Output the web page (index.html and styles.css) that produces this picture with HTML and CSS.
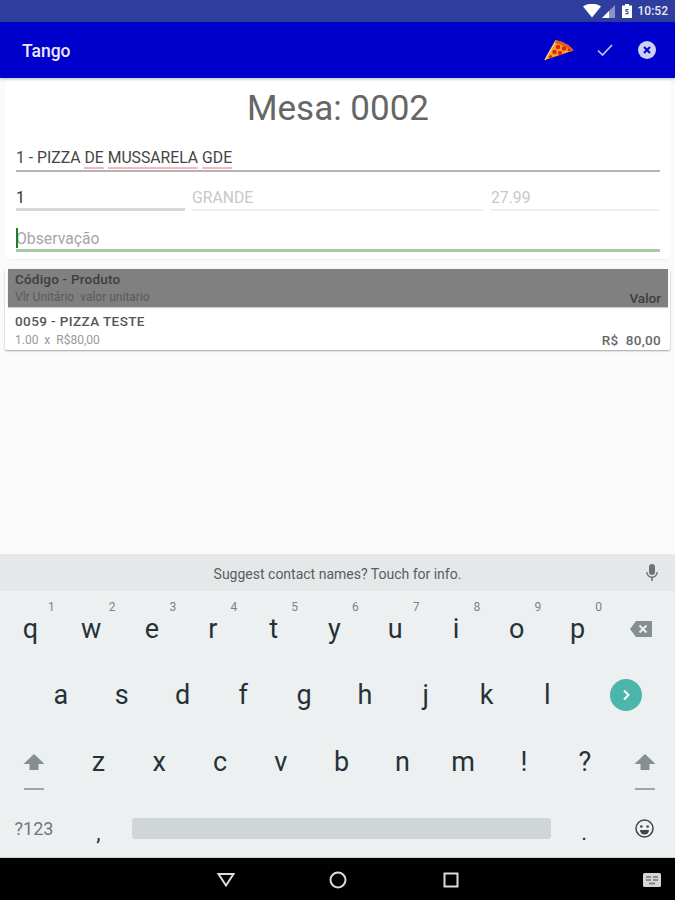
FILE: index.html
```html
<!DOCTYPE html>
<html lang="pt">
<head>
<meta charset="utf-8">
<title>Tango</title>
<link rel="stylesheet" href="styles.css">
</head>
<body>
<div class="screen">
  <div class="statusbar">
    <svg class="st-wifi" width="18" height="14" viewBox="0 0 18 14"><path d="M0 2.500C5-1 13-1 18 2.500L9 13.500z" fill="#fff"/></svg>
    <svg class="st-signal" width="13" height="13" viewBox="0 0 13 13"><path d="M0 13L13 0v13z" fill="#8d94c4"/><path d="M0 13l7-7v7z" fill="#fff"/></svg>
    <svg class="st-batt" width="10" height="14" viewBox="0 0 10 14"><path d="M3 0h4v1.500h3V14H0V1.500h3z" fill="#fff"/><path d="M3.500 5h3v1.300h-2v1h2v3h-3V9h2V8h-2z" fill="#3a469c"/></svg>
    <span class="st-time">10:52</span>
  </div>
  <header class="appbar">
    <span class="app-title">Tango</span>
    <div class="app-actions">
      <svg class="ic-pizza" width="30" height="22" viewBox="0 0 30 22">
        <path d="M1 21L12 1.500C18 2 26 6 29.500 11.500z" fill="#f9a21b"/>
        <path d="M1 21L12 1.500" stroke="#f9d080" stroke-width="1.500"/>
        <path d="M12 1.500C18 2 26 6 29.500 11.500l-2.500 1C23 8 17 5 11 4z" fill="#e8561b"/>
        <circle cx="14" cy="8" r="2.300" fill="#d8261c"/><circle cx="20" cy="9.500" r="2.300" fill="#d8261c"/>
        <circle cx="10.500" cy="13" r="2.300" fill="#d8261c"/><circle cx="16" cy="14" r="2.200" fill="#d8261c"/>
        <circle cx="25" cy="11" r="1.300" fill="#d8261c"/><circle cx="6.500" cy="17.500" r="1.600" fill="#d8261c"/>
      </svg>
      <svg class="ic-check" width="16" height="12" viewBox="0 0 16 12"><path d="M1 6.500l4.500 4.500L15 1" fill="none" stroke="#c9cbf3" stroke-width="1.600"/></svg>
      <svg class="ic-close" width="18" height="18" viewBox="0 0 18 18"><circle cx="9" cy="9" r="9" fill="#cdcff6"/><path d="M6 6l6 6M12 6l-6 6" stroke="#0000cd" stroke-width="2"/></svg>
    </div>
  </header>
  <main class="content">
    <section class="form-card">
      <h1 class="mesa">Mesa: 0002</h1>
      <div class="field field-main">1 - PIZZA <span class="spell">DE</span> <span class="spell">MUSSARELA</span> <span class="spell">GDE</span></div>
      <div class="field-row">
        <div class="field field-qty">1</div>
        <div class="field field-off field-size">GRANDE</div>
        <div class="field field-off field-price">27.99</div>
      </div>
      <div class="field field-obs"><span class="cursor"></span>Observação</div>
    </section>
    <section class="list-card">
      <div class="list-head">
        <div class="cell-left">
          <div class="title-line">Código - Produto</div>
          <div class="sub-line">Vlr Unitário&nbsp; valor unitario</div>
        </div>
        <div class="cell-value">Valor</div>
      </div>
      <div class="list-row">
        <div class="cell-left">
          <div class="title-line">0059 - PIZZA TESTE</div>
          <div class="sub-line">1.00&nbsp; x&nbsp; R$80,00</div>
        </div>
        <div class="cell-value">R$&nbsp; 80,00</div>
      </div>
    </section>
  </main>
  <div class="keyboard">
    <div class="suggest">
      <span class="suggest-text">Suggest contact names? Touch for info.</span>
      <svg class="ic-mic" width="12" height="18" viewBox="0 0 12 18"><rect x="3" y="0" width="6" height="11" rx="3" fill="#6b7478"/><path d="M.8 8a5.200 5.200 0 0 0 10.400 0" fill="none" stroke="#6b7478" stroke-width="1.400"/><path d="M6 13v4" stroke="#6b7478" stroke-width="1.600"/></svg>
    </div>
    <div class="kb-row row-first">
      <div class="key"><sup>1</sup>q</div><div class="key"><sup>2</sup>w</div><div class="key"><sup>3</sup>e</div><div class="key"><sup>4</sup>r</div><div class="key"><sup>5</sup>t</div><div class="key"><sup>6</sup>y</div><div class="key"><sup>7</sup>u</div><div class="key"><sup>8</sup>i</div><div class="key"><sup>9</sup>o</div><div class="key"><sup>0</sup>p</div>
      <div class="key key-grow">
        <svg width="22" height="16" viewBox="0 0 22 16"><path d="M6 0h16v16H6L0 8z" fill="#858e92"/><path d="M9.500 4.500l7 7M16.500 4.500l-7 7" stroke="#eceff1" stroke-width="2"/></svg>
      </div>
    </div>
    <div class="kb-row row-indent">
      <div class="key">a</div><div class="key">s</div><div class="key">d</div><div class="key">f</div><div class="key">g</div><div class="key">h</div><div class="key">j</div><div class="key">k</div><div class="key">l</div>
      <div class="key key-grow">
        <svg width="32" height="32" viewBox="0 0 32 32"><circle cx="16" cy="16" r="16" fill="#4db6ac"/><path d="M14 11.500l4.500 4.500-4.500 4.500" fill="none" stroke="#fff" stroke-width="2"/></svg>
      </div>
    </div>
    <div class="kb-row row-third">
      <div class="key key-side key-shift">
        <svg width="22" height="36" viewBox="0 0 22 36"><path d="M11 0L21.500 10H15.500V16H6.500V10H.5z" fill="#858e92"/><path d="M1 35h20" stroke="#858e92" stroke-width="1.500"/></svg>
      </div>
      <div class="key">z</div><div class="key">x</div><div class="key">c</div><div class="key">v</div><div class="key">b</div><div class="key">n</div><div class="key">m</div><div class="key">!</div><div class="key">?</div>
      <div class="key key-grow key-shift">
        <svg width="22" height="36" viewBox="0 0 22 36"><path d="M11 0L21.500 10H15.500V16H6.500V10H.5z" fill="#858e92"/><path d="M1 35h20" stroke="#858e92" stroke-width="1.500"/></svg>
      </div>
    </div>
    <div class="kb-row row-last">
      <div class="key key-side key-sym">?123</div>
      <div class="key key-punct">,</div>
      <div class="key key-space"><span class="spacebar"></span></div>
      <div class="key key-punct">.</div>
      <div class="key key-grow">
        <svg width="19" height="19" viewBox="0 0 19 19"><circle cx="9.500" cy="9.500" r="8.500" fill="none" stroke="#3c4548" stroke-width="1.500"/><circle cx="6.300" cy="7.500" r="1.300" fill="#3c4548"/><circle cx="12.700" cy="7.500" r="1.300" fill="#3c4548"/><path d="M5 11h9a4.500 4.500 0 0 1-9 0z" fill="#3c4548"/></svg>
      </div>
    </div>
  </div>
  <nav class="navbar">
    <svg class="nav-back" width="18" height="14" viewBox="0 0 18 14"><path d="M1.500 1h15L9 12.500z" fill="none" stroke="#dcdcdc" stroke-width="2"/></svg>
    <svg class="nav-home" width="18" height="18" viewBox="0 0 18 18"><circle cx="9" cy="9" r="7.500" fill="none" stroke="#dcdcdc" stroke-width="2"/></svg>
    <svg class="nav-recent" width="16" height="16" viewBox="0 0 16 16"><rect x="1.500" y="1.500" width="13" height="13" fill="none" stroke="#dcdcdc" stroke-width="2"/></svg>
    <svg class="nav-kbd" width="18" height="14" viewBox="0 0 18 14"><rect width="18" height="14" rx="1.500" fill="#d6d6d6"/><path d="M3 4h5M10 4h5M3 7h5M10 7h5M6 10.500h6" stroke="#777" stroke-width="1.300"/></svg>
  </nav>
</div>
</body>
</html>
```
FILE: styles.css
```css
* { box-sizing: border-box; }
html, body { margin: 0; padding: 0; }
body { width: 675px; height: 900px; overflow: hidden; font-family: Roboto, "Noto Sans", sans-serif; }
.screen { width: 675px; height: 900px; display: flex; flex-direction: column; background: #fafafa; }

.statusbar { height: 22px; flex: none; background: #2f3d9d; display: flex; align-items: center; justify-content: flex-end; padding-right: 7px; color: #fff; }
.st-wifi { margin-right: 1px; }
.st-signal { margin-right: 7px; }
.st-batt { margin-right: 6px; }
.st-time { font-size: 12px; font-weight: 500; color: #e8eaf6; }

.appbar { height: 56px; flex: none; background: #0000cd; display: flex; align-items: center; justify-content: space-between; padding: 0 19px 0 22px; box-shadow: 0 1px 3px rgba(0,0,0,.25); position: relative; }
.app-title { color: #e9e9fb; font-size: 17.500px; font-weight: 500; padding-top: 1px; }
.app-actions { display: flex; align-items: center; }
.ic-pizza { margin-right: 23px; }
.ic-check { margin-right: 25px; }

.content { flex: 1; min-height: 0; padding: 2px 5px 0; }
.form-card { background: #fff; border-radius: 4px; height: 179px; padding: 10px 10px 0 11px; box-shadow: 0 1px 1px rgba(0,0,0,.04); }
.mesa { margin: 0; height: 38px; line-height: 38px; font-size: 35px; font-weight: 400; text-align: center; color: #666; }
.field { font-size: 15.750px; height: 24px; line-height: 21px; color: #333; border-bottom: 2px solid #b5b5b5; }
.field-main { margin-top: 19px; height: 25px; color: #444; }
.spell { border-bottom: 2px solid #f7b8bf; }
.field-row { display: flex; gap: 7px; margin-top: 15px; }
.field-qty { width: 169px; border-bottom: 3px solid #d6d6d6; }
.field-off { color: #c8c8c8; border-bottom: 2px solid #efefef; }
.field-size { width: 292px; }
.field-price { width: 169px; }
.field-obs { margin-top: 17px; color: #a6a6a6; border-bottom: 3px solid #a9c8a4; position: relative; }
.cursor { position: absolute; left: 0; top: 0; width: 2px; height: 20px; background: #1f7a2a; }

.list-card { margin-top: 10px; width: 665px; background: #fff; border-radius: 2px; box-shadow: 0 1px 2px rgba(0,0,0,.35); }
.list-head { height: 38px; background: #808080; display: flex; justify-content: space-between; align-items: flex-end; margin: 0 2px 1px 3px; padding: 0 7px 1px 7px; box-shadow: 0 1px 1px rgba(0,0,0,.2); }
.list-row { height: 42px; display: flex; justify-content: space-between; align-items: flex-end; padding: 0 9px 1px 10px; }
.title-line { font-size: 13.500px; font-weight: 500; line-height: 17px; color: #555; letter-spacing: .4px; }
.sub-line { font-size: 12px; line-height: 17px; color: #999; margin-top: 1px; }
.list-row .sub-line { margin-top: 2px; }
.list-head .title-line { color: #3d3d3d; letter-spacing: .2px; }
.list-head .sub-line { color: #5a5a5a; }
.cell-value { font-size: 13.500px; font-weight: 500; color: #666; line-height: 15px; letter-spacing: .3px; }
.list-row .cell-value { margin-bottom: 1px; }
.list-head .cell-value { color: #3d3d3d; letter-spacing: 0; }

.keyboard { height: 304px; flex: none; background: #edf0f1; border-bottom: 1px solid #cfd2d4; }
.suggest { height: 37px; background: #e5e8e9; display: flex; align-items: center; justify-content: center; position: relative; }
.suggest-text { font-size: 14px; color: #555e62; padding-top: 3px; }
.ic-mic { position: absolute; right: 17px; top: 10px; }
.kb-row { display: flex; height: 68px; }
.row-first { height: 70px; padding-top: 5px; }
.row-third { height: 66px; }
.kb-row.row-last { height: 63px; padding-top: 4px; }
.row-indent { padding-left: 30.500px; }
.key { width: 60.800px; flex: none; position: relative; display: flex; align-items: center; justify-content: center; font-size: 27px; color: #263238; }
.key sup { position: absolute; top: 4px; left: 0; right: 0; margin-left: 42px; text-align: center; font-size: 12px; color: #78848a; line-height: 14px; }
.key-grow { flex: 1; width: auto; }
.key-side { width: 68px; }
.key-shift { padding-top: 20px; }
.key-sym { font-size: 18px; color: #6d777b; }
.key-punct { font-size: 22px; padding-top: 8px; }
.key-space { width: 425px; }
.spacebar { display: block; width: 419px; height: 21px; border-radius: 3px; background: #cfd5d8; }

.navbar { height: 42px; flex: none; background: #000; display: flex; align-items: center; position: relative; padding-left: 217px; padding-top: 1px; }
.nav-back { margin-right: 94px; }
.nav-home { margin-right: 96px; }
.nav-kbd { position: absolute; right: 14px; top: 15px; }
```
